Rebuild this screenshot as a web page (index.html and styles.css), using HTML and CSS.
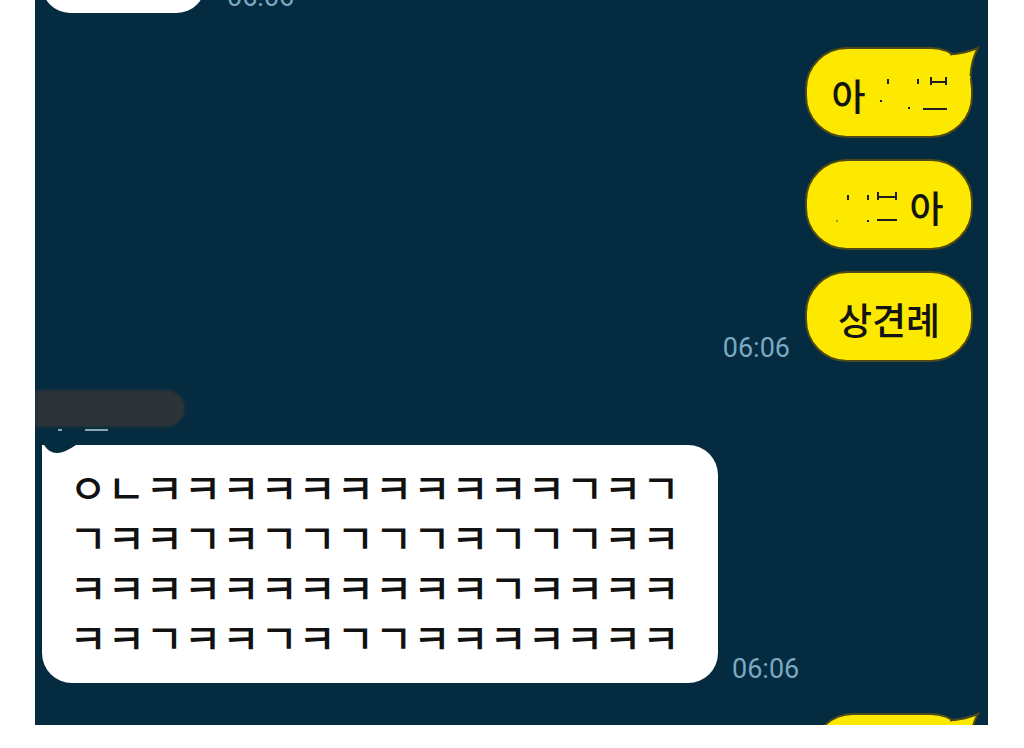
FILE: index.html
```html
<!DOCTYPE html>
<html lang="ko">
<head>
<meta charset="utf-8">
<title>Chat</title>
<link rel="stylesheet" href="styles.css">
</head>
<body>
<div class="panel">
  <div class="chat">
    <div class="row recv row-top">
      <div class="bubble bubble-cut"></div>
      <span class="time time-top">06:06</span>
    </div>

    <div class="sent-group">
      <div class="ybubble">
        <span class="ytext">아</span>
        <svg class="marks" width="74" height="36" viewBox="0 0 74 36" fill="#1e1e1e">
          <rect x="14" y="3" width="2" height="5"/>
          <rect x="44" y="3" width="2" height="5"/>
          <rect x="57" y="1" width="2" height="8"/>
          <rect x="72" y="1" width="2" height="8"/>
          <rect x="57" y="5" width="17" height="2"/>
          <rect x="7" y="24" width="2" height="2"/>
          <rect x="35" y="31" width="2" height="2"/>
          <rect x="50" y="32" width="24" height="2"/>
        </svg>
        <svg class="ytail" width="32" height="36" viewBox="0 0 32 36">
          <path d="M0 9 Q18 8 30 2 Q24 13 22 34 L4 30 Z" fill="#fde800"/>
          <path d="M2 8.5 Q18 7 30 2 Q23.5 13 22.5 30" fill="none" stroke="#4d4a17" stroke-width="2"/>
        </svg>
      </div>
      <div class="ybubble">
        <svg class="marks marks2" width="68" height="36" viewBox="0 0 68 36" fill="#1e1e1e">
          <rect x="13" y="5" width="2" height="5"/>
          <rect x="33" y="5" width="2" height="5"/>
          <rect x="43" y="2" width="2" height="8"/>
          <rect x="61" y="2" width="2" height="8"/>
          <rect x="43" y="6" width="20" height="2"/>
          <rect x="43" y="29" width="20" height="2"/>
          <rect x="33" y="30" width="2" height="2"/>
          <rect x="2" y="30" width="2" height="2" opacity="0.4"/>
        </svg>
        <span class="ytext">아</span>
      </div>
      <div class="row sent">
        <span class="time">06:06</span>
        <div class="ybubble"><span class="ytext">상견례</span></div>
      </div>
    </div>

    <div class="sender">
      <div class="name-blur"></div>
      <div class="name-marks"><i class="m-dot"></i><i class="m-line"></i></div>
    </div>

    <div class="row recv">
      <div class="bubble bubble-big">
        <svg class="wnotch" width="34" height="10" viewBox="0 0 34 10">
          <path d="M2 0 Q8 9 16 8 Q24 7 34 0 Z" fill="#042b40"/>
        </svg>
        <div class="line"><span>ㅇ</span><span>ㄴ</span><span>ㅋ</span><span>ㅋ</span><span>ㅋ</span><span>ㅋ</span><span>ㅋ</span><span>ㅋ</span><span>ㅋ</span><span>ㅋ</span><span>ㅋ</span><span>ㅋ</span><span>ㅋ</span><span>ㄱ</span><span>ㅋ</span><span>ㄱ</span></div>
        <div class="line"><span>ㄱ</span><span>ㅋ</span><span>ㅋ</span><span>ㄱ</span><span>ㅋ</span><span>ㄱ</span><span>ㄱ</span><span>ㄱ</span><span>ㄱ</span><span>ㄱ</span><span>ㅋ</span><span>ㄱ</span><span>ㄱ</span><span>ㄱ</span><span>ㅋ</span><span>ㅋ</span></div>
        <div class="line"><span>ㅋ</span><span>ㅋ</span><span>ㅋ</span><span>ㅋ</span><span>ㅋ</span><span>ㅋ</span><span>ㅋ</span><span>ㅋ</span><span>ㅋ</span><span>ㅋ</span><span>ㅋ</span><span>ㄱ</span><span>ㅋ</span><span>ㅋ</span><span>ㅋ</span><span>ㅋ</span></div>
        <div class="line"><span>ㅋ</span><span>ㅋ</span><span>ㄱ</span><span>ㅋ</span><span>ㅋ</span><span>ㄱ</span><span>ㅋ</span><span>ㄱ</span><span>ㄱ</span><span>ㅋ</span><span>ㅋ</span><span>ㅋ</span><span>ㅋ</span><span>ㅋ</span><span>ㅋ</span><span>ㅋ</span></div>
      </div>
      <span class="time">06:06</span>
    </div>

    <div class="sent-group sent-next">
      <div class="ybubble ybubble-peek">
        <svg class="ytail" width="32" height="36" viewBox="0 0 32 36">
          <path d="M0 9 Q18 8 30 2 Q24 13 22 34 L4 30 Z" fill="#fde800"/>
          <path d="M2 8.5 Q18 7 30 2 Q23.5 13 22.5 30" fill="none" stroke="#4d4a17" stroke-width="2"/>
        </svg>
      </div>
    </div>
  </div>
</div>
</body>
</html>
```

FILE: styles.css
```css
html, body {
  margin: 0;
  padding: 0;
  background: #ffffff;
}

body {
  font-family: "Noto Sans CJK KR", "Noto Sans", sans-serif;
}

.panel {
  width: 953px;
  height: 725px;
  margin-left: 35px;
  background: #042b40;
  overflow: hidden;
  position: relative;
}

.chat {
  display: flex;
  flex-direction: column;
  padding: 0 15px 0 7px;
  margin-top: -47px;
}

.row {
  display: flex;
  align-items: flex-end;
}

.recv {
  justify-content: flex-start;
  gap: 14px;
}

.sent {
  justify-content: flex-end;
  gap: 15px;
}

.time {
  font-family: Roboto, "Liberation Sans", sans-serif;
  font-size: 27px;
  line-height: 27px;
  color: #79a9c3;
}

.time-top {
  margin-left: 8px;
  margin-bottom: 2px;
}

.bubble {
  background: #ffffff;
  border-radius: 30px;
  position: relative;
}

.bubble-cut {
  width: 163px;
  height: 60px;
  border-radius: 28px;
}

.sent-group {
  display: flex;
  flex-direction: column;
  align-items: flex-end;
  gap: 21px;
  margin-top: 34px;
}

.ybubble {
  width: 168px;
  height: 91px;
  box-sizing: border-box;
  background: #fde800;
  border: 2px solid #4d4a17;
  border-radius: 42px;
  display: flex;
  align-items: center;
  justify-content: center;
  padding-top: 6px;
  position: relative;
}

.ytext {
  font-size: 37px;
  font-weight: 500;
  line-height: 1;
  color: #141414;
}

.marks {
  margin-left: 7px;
  margin-bottom: 4px;
}

.marks2 {
  margin-left: 0;
  margin-right: 7px;
  margin-bottom: 0;
}

.ytail {
  position: absolute;
  top: -3px;
  right: -9px;
}

.sender {
  margin-top: 28px;
  margin-left: -7px;
  display: flex;
  flex-direction: column;
}

.name-blur {
  width: 150px;
  height: 37px;
  background: #2d3438;
  border-radius: 0 19px 19px 0;
  filter: blur(1.5px);
}

.name-marks {
  height: 18px;
  position: relative;
}

.name-marks i {
  position: absolute;
  top: 2px;
  height: 2px;
  background: #8ea6b3;
}

.m-dot {
  left: 23px;
  width: 4px;
}

.m-line {
  left: 50px;
  width: 23px;
}

.bubble-big {
  width: 676px;
  height: 238px;
  box-sizing: border-box;
  padding: 16px 0 0 27px;
  border-top-left-radius: 0;
}

.wnotch {
  position: absolute;
  top: 0;
  left: 0;
}

.line {
  display: grid;
  grid-template-columns: repeat(16, 38.2px);
  font-size: 41px;
  font-weight: 500;
  line-height: 50px;
  color: #111111;
}

.line span {
  text-align: center;
}

.sent-next {
  margin-top: 30px;
}

.ybubble-peek {
  width: 162px;
}
```
